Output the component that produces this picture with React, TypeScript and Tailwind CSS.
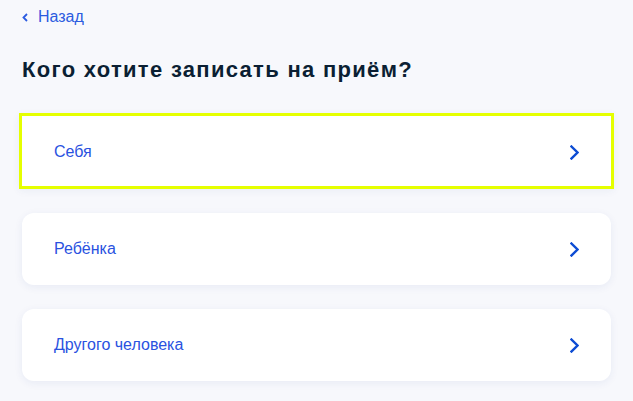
import React from 'react';

const Chevron: React.FC<{ className?: string }> = ({ className }) => (
  <svg viewBox="0 0 9 15" className={className} fill="none">
    <path d="M1.5 1.5l6 6-6 6" stroke="currentColor" strokeWidth="2.4" strokeLinecap="square" />
  </svg>
);

export default function App() {
  const options = ['Себя', 'Ребёнка', 'Другого человека'];

  return (
    <div className="min-h-[401px] bg-[#f7f8fc] px-[22px] pt-[5px] font-['Liberation_Sans',Arial,sans-serif]">
      <a href="#" className="inline-flex items-center gap-[10px] text-[16px] leading-[20px] text-[#2b5be0]">
        <svg viewBox="0 0 6 9" className="w-[6px] h-[9px] mt-[2px]" fill="none">
          <path d="M5 1L1.5 4.5 5 8" stroke="currentColor" strokeWidth="1.8" />
        </svg>
        Назад
      </a>

      <h1 className="mt-[27px] text-[22px] font-bold tracking-[1.3px] text-[#0b1f33] leading-[28px]">
        Кого хотите записать на приём?
      </h1>

      <div className="mt-[29px] flex flex-col gap-[24px]">
        {options.map((label, i) => (
          <button
            key={label}
            className={
              i === 0
                ? 'flex h-[76px] -mx-[3px] items-center justify-between border-[3px] border-[#e5ff00] bg-white pl-[32px] pr-[32px] pt-[2px] text-left shadow-[0_2px_8px_rgba(30,60,140,0.06)]'
                : 'flex h-[72px] items-center justify-between rounded-[12px] bg-white pl-[32px] pr-[32px] text-left shadow-[0_2px_8px_rgba(30,60,140,0.07)]'
            }
          >
            <span className="text-[16px] text-[#2a52df]">{label}</span>
            <Chevron className="w-[9px] h-[15px] text-[#0d4cd3]" />
          </button>
        ))}
      </div>
    </div>
  );
}
